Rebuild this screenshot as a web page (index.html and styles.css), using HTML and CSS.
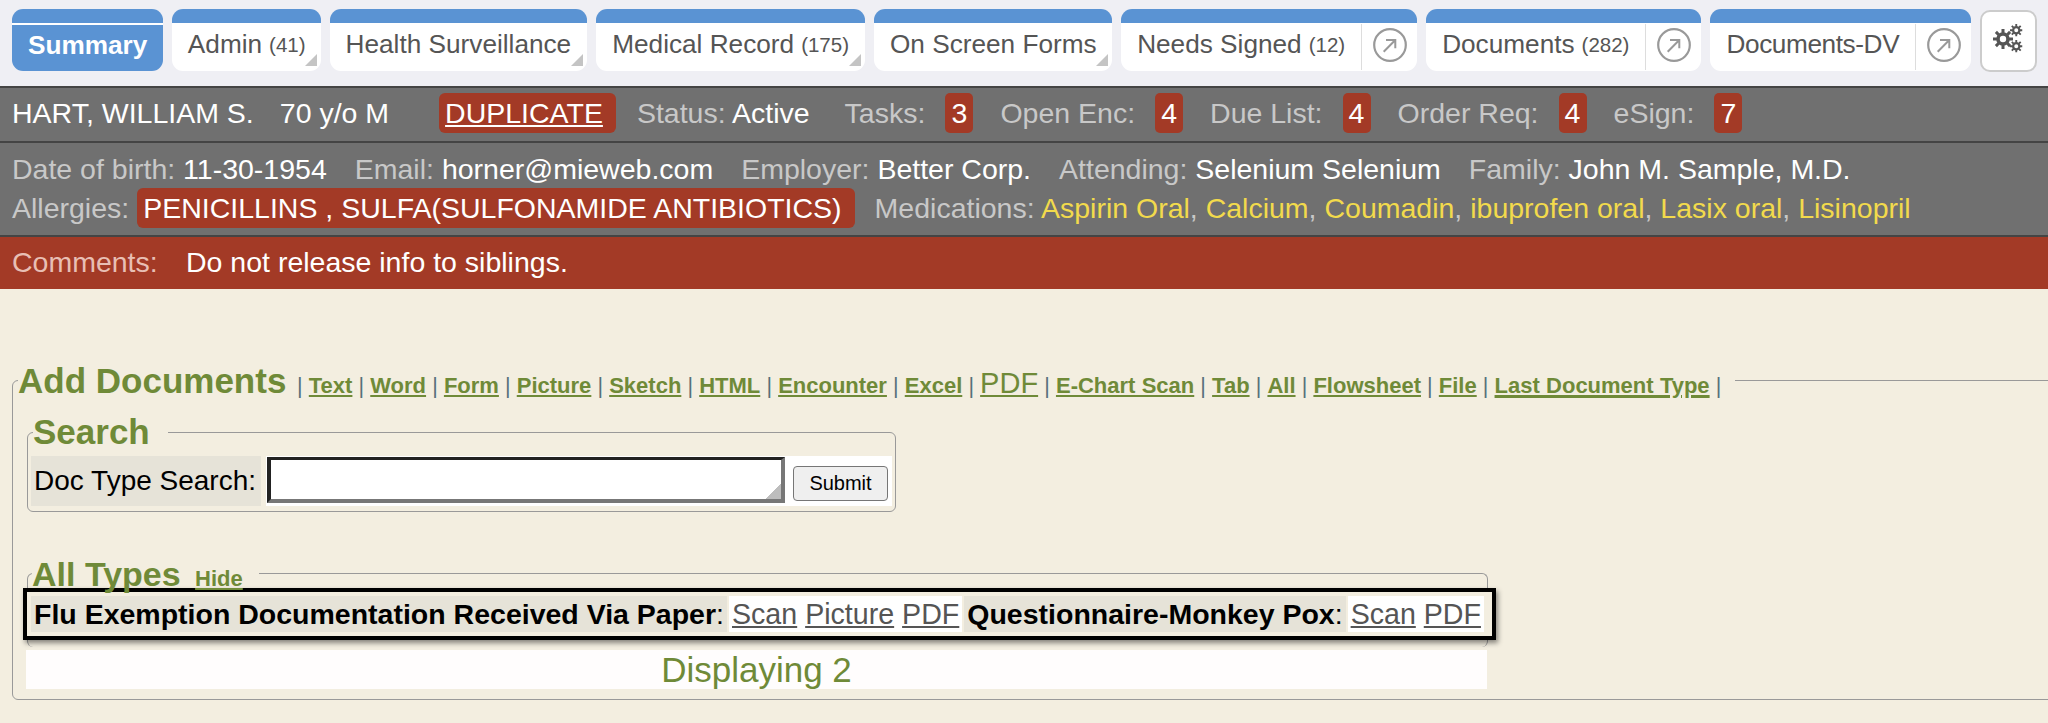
FILE: index.html
```html
<!DOCTYPE html>
<html lang="en">
<head>
<meta charset="utf-8">
<title>Add Documents</title>
<link rel="stylesheet" href="styles.css">
</head>
<body>
<svg class="defs" aria-hidden="true">
  <symbol id="go" viewBox="0 0 34 34">
    <circle cx="17" cy="17" r="15.8" fill="none" stroke="#999" stroke-width="2.2"/>
    <path d="M10.700 23.700 22.300 12M13 12h9.300v8.300" fill="none" stroke="#999" stroke-width="2"/>
  </symbol>
  <symbol id="cog" viewBox="0 0 20 20">
    <g fill="none" stroke="#555">
      <circle cx="10" cy="10" r="5" stroke-width="3.6"/>
      <path d="M10 0v4M10 16v4M0 10h4M16 10h4M2.900 2.900l2.800 2.800M14.300 14.300l2.800 2.800M2.900 17.100l2.800-2.800M14.300 5.700l2.800-2.800" stroke-width="3"/>
    </g>
  </symbol>
</svg>
<nav class="tabs">
  <a class="tab active"><span class="tab-main">Summary</span></a>
  <a class="tab menu"><span class="tab-main">Admin <small>(41)</small></span></a>
  <a class="tab menu"><span class="tab-main">Health Surveillance</span></a>
  <a class="tab menu wide"><span class="tab-main">Medical Record <small>(175)</small></span></a>
  <a class="tab menu"><span class="tab-main">On Screen Forms</span></a>
  <a class="tab"><span class="tab-main">Needs Signed <small>(12)</small></span><span class="tab-go"><svg class="go"><use href="#go"/></svg></span></a>
  <a class="tab"><span class="tab-main">Documents <small>(282)</small></span><span class="tab-go"><svg class="go"><use href="#go"/></svg></span></a>
  <a class="tab tight"><span class="tab-main">Documents-DV</span><span class="tab-go"><svg class="go"><use href="#go"/></svg></span></a>
  <button class="gear" type="button" aria-label="Settings">
    <svg viewBox="0 0 30 30" width="30" height="30">
      <use href="#cog" x="0" y="5" width="20" height="20"/>
      <use href="#cog" x="17" y="0" width="12.500" height="12.500"/>
      <use href="#cog" x="17" y="16" width="12.500" height="12.500"/>
    </svg>
  </button>
</nav>
<header class="patient">
  <div class="row-top">
    <span class="v name">HART, WILLIAM S.</span>
    <span class="v age">70 y/o M</span>
    <a class="pill dup">DUPLICATE</a>
    <span class="k status">Status: <span class="v">Active</span></span>
    <span class="k t1">Tasks:</span><b class="count">3</b>
    <span class="k">Open Enc:</span><b class="count">4</b>
    <span class="k">Due List:</span><b class="count">4</b>
    <span class="k">Order Req:</span><b class="count">4</b>
    <span class="k">eSign:</span><b class="count">7</b>
  </div>
  <div class="details">
    <div class="line">
      <span class="k">Date of birth: <span class="v">11-30-1954</span></span>
      <span class="k">Email: <span class="v">horner@mieweb.com</span></span>
      <span class="k">Employer: <span class="v">Better Corp.</span></span>
      <span class="k">Attending: <span class="v">Selenium Selenium</span></span>
      <span class="k">Family: <span class="v">John M. Sample, M.D.</span></span>
    </div>
    <div class="line line-b">
      <span class="k">Allergies:</span>
      <span class="pill allergy">PENICILLINS , SULFA(SULFONAMIDE ANTIBIOTICS)</span>
      <span class="k meds">Medications: <a>Aspirin Oral</a>, <a>Calcium</a>, <a>Coumadin</a>, <a>ibuprofen oral</a>, <a>Lasix oral</a>, <a>Lisinopril</a></span>
    </div>
  </div>
  <div class="comments"><span class="c-k">Comments:</span><span class="v">Do not release info to siblings.</span></div>
</header>
<main class="content">
  <fieldset class="box add">
    <legend class="legend add-legend">Add Documents <span class="links">| <a>Text</a> | <a>Word</a> | <a>Form</a> | <a>Picture</a> | <a>Sketch</a> | <a>HTML</a> | <a>Encounter</a> | <a>Excel</a> | <a class="big">PDF</a> | <a>E-Chart Scan</a> | <a>Tab</a> | <a>All</a> | <a>Flowsheet</a> | <a>File</a> | <a class="last">Last Document Type</a> |</span></legend>
    <fieldset class="box search">
      <legend class="legend">Search</legend>
      <form class="search-row">
        <label class="cell-label" for="dt">Doc Type Search:</label>
        <div class="cell-field">
          <textarea class="doc-input" id="dt" rows="1"></textarea>
          <button class="submit" type="button">Submit</button>
        </div>
      </form>
    </fieldset>
    <fieldset class="box types">
      <legend class="legend">All Types <a class="hide">Hide</a></legend>
      <div class="type-list">
        <b class="type-name">Flu Exemption Documentation Received Via Paper<span>:</span></b>
        <span class="type-links"><a>Scan</a> <a>Picture</a> <a>PDF</a></span>
        <b class="type-name">Questionnaire-Monkey Pox<span>:</span></b>
        <span class="type-links"><a>Scan</a> <a>PDF</a></span>
      </div>
    </fieldset>
    <div class="displaying">Displaying 2</div>
  </fieldset>
</main>
</body>
</html>
```
FILE: styles.css
```css
* { box-sizing: border-box; }
html, body { margin: 0; height: 100%; }
body { font-family: "Liberation Sans", Arial, sans-serif; background: #f3eee0; overflow: hidden; }
.defs { display: none; }

.tabs { display: flex; gap: 9px; height: 88px; padding: 9px 11px 0 12px; background: #efeff4; border-bottom: 2px solid #444; align-items: flex-start; }
.tab { position: relative; display: flex; height: 62px; background: #fff; border-top: 14px solid #5a93d3; border-radius: 11px; color: #555; font-size: 26.2px; white-space: nowrap; }
.tab small { font-size: 20.5px; }
.tab-main { display: flex; align-items: center; gap: 7px; padding: 0 16px 5px; }
.tab.menu .tab-main { padding: 0 15.5px 5px; }
.tab.menu.wide .tab-main { padding: 0 16.5px 5px; }
.tab.tight .tab-main { letter-spacing: -0.4px; }
.tab.active { background: #5a93d3; color: #fff; font-weight: bold; box-shadow: inset 0 2px 0 #fff; }
.tab.active .tab-main { padding-top: 1px; }
.tab.menu::after { content: ""; position: absolute; right: 4px; bottom: 5px; border-style: solid; border-width: 0 0 12px 12px; border-color: transparent transparent #c4c4c4 transparent; }
.tab-go { display: flex; align-items: center; padding: 0 10px 0 11px; border-left: 1px solid #ddd; margin: 1px 0; }
.go { width: 34px; height: 34px; display: block; margin-top: -4px; }
.gear { width: 57px; height: 62px; margin-top: 1px; padding: 0 2px 4px 0; background: #fff; border: 2px solid #ccc; border-radius: 10px; display: flex; align-items: center; justify-content: center; }

.patient { background: #707070; color: #c8c8c8; font-size: 28.5px; line-height: 32px; white-space: nowrap; }
.v { color: #fff; }
.row-top { display: flex; align-items: center; height: 55px; padding: 0 0 3px 12px; border-bottom: 2px solid #444; }
.age { margin-left: 26px; }
.pill { background: #a33a26; color: #fff; border-radius: 6px; }
.dup { margin-left: 50px; padding: 0 13px 0 6px; height: 40px; line-height: 40px; text-decoration: underline; }
.status { margin-left: 21px; }
.count { background: #a33a26; color: #fff; font-weight: normal; border-radius: 5px; width: 28px; height: 40px; line-height: 40px; text-align: center; margin-left: 20px; margin-right: 27px; }
.t1 { margin-left: 35px; }
.details { height: 94px; padding: 7px 0 0 12px; border-bottom: 2px solid #444; }
.line { display: flex; gap: 28px; height: 38px; line-height: 39px; }
.line-b { gap: 8px; height: 40px; line-height: 40px; }
.allergy { padding: 0 13px 0 6px; }
.meds { margin-left: 12px; }
.meds a { color: #f2da4c; }
.comments { display: flex; height: 52px; line-height: 50px; padding-left: 12px; background: #a33a26; }
.c-k { color: #e8bfb4; width: 174px; }

.content { padding: 0 0 0 12px; }
.box { margin: 0; border: 1px solid #999; border-radius: 6px; min-width: 0; }
.add { margin-top: 66px; margin-right: -10px; height: 345px; padding: 0 0 0 14px; }
.legend { color: #6f8a38; font-weight: bold; font-size: 34px; line-height: 40px; padding: 0 12px 0 2px; white-space: nowrap; }
.add-legend { font-size: 35px; margin-left: -9px; padding: 6px 14px 0 0; }
.links { color: #56707a; font-size: 21.5px; font-weight: normal; margin-left: 1px; word-spacing: 0.15px; }
.links a, .hide { color: #6f8a38; font-weight: bold; text-decoration: underline; font-size: 22px; }
.links a.big { font-size: 29px; font-weight: normal; }
.links a.last { text-decoration-thickness: 3px; }
.hide { margin-left: 5px; }
.search { width: 869px; height: 100px; padding: 0 3px; margin-top: 6px; }
.search .legend { font-size: 35px; padding: 0 18px 0 0; margin-left: 2px; }
.search-row { display: flex; height: 50px; gap: 5px; margin-top: 4px; }
.cell-label { display: flex; align-items: center; width: 230px; padding-left: 3px; background: #e6e3d8; color: #000; font-size: 28px; }
.cell-field { display: flex; flex: 1; background: #fff; gap: 8px; padding: 1px 0 3px 1px; }
.doc-input { width: 518px; height: 46px; padding: 0; background: #fff; border-style: solid; border-width: 3px 4px 4px 4px; border-color: #222 #777 #777 #222; outline: none; }
.doc-input::-webkit-resizer { background: linear-gradient(135deg, transparent 50%, #bdbdbd 50%); }
.submit { width: 95px; height: 35px; margin-top: 9px; padding: 0; background: #efefef; border: 1px solid #767676; border-radius: 4px; color: #000; font: 20px "Liberation Sans", Arial, sans-serif; }

.types { width: 1461px; height: 99px; margin-top: 36px; padding: 0; border-bottom: 0; }
.types .legend { padding: 6px 16px 0 0; margin-left: 4px; }
.type-list { display: flex; align-items: center; height: 52px; margin: -11px -9px 0 -5px; padding: 0 4px; border: 4px solid #000; box-shadow: 2px 3px 5px rgba(0,0,0,.45); background: #f3eee0; font-size: 28.5px; color: #000; white-space: nowrap; }
.type-name { background: #e6e3d8; height: 36px; line-height: 36px; padding: 0 3px; }
.type-name span { font-weight: normal; }
.type-links { background: #fff; height: 36px; line-height: 36px; padding: 0 3px; margin: 0 2px; font-size: 28.6px; }
.type-links a { color: #555; text-decoration: underline; }
.displaying { width: 1461px; height: 39px; margin: 3px 0 0 -1px; background: #fffdfd; color: #6f8a38; font-size: 35px; line-height: 39px; text-align: center; }
```
